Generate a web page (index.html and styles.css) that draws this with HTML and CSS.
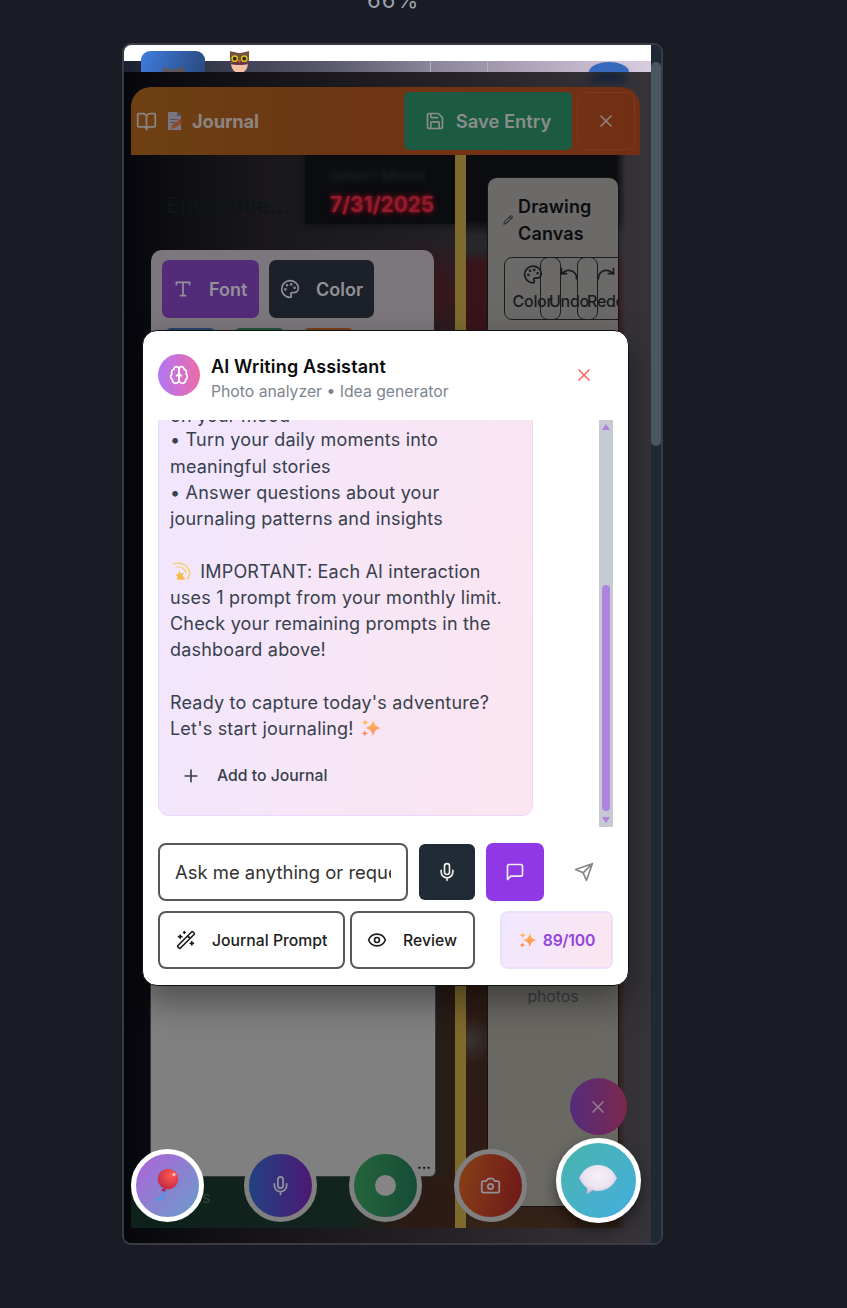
FILE: index.html
```html
<!DOCTYPE html>
<html lang="en">
<head>
<meta charset="utf-8">
<title>Journal</title>
<link rel="stylesheet" href="styles.css">
</head>
<body>
<svg class="defs" width="0" height="0">
  <defs>
    <linearGradient id="gold" x1="0" y1="0" x2="0" y2="1"><stop offset="0" stop-color="#ffc04d"/><stop offset="1" stop-color="#ff8a65"/></linearGradient>
    <radialGradient id="red" cx=".65" cy=".3" r=".8"><stop offset="0" stop-color="#ff5a50"/><stop offset="1" stop-color="#bd2544"/></radialGradient>
    <radialGradient id="cloud" cx=".5" cy=".4" r=".65"><stop offset="0" stop-color="#f7f1f8"/><stop offset=".6" stop-color="#ebe3ef"/><stop offset="1" stop-color="#c3a9d6"/></radialGradient>
    <symbol id="x" viewBox="0 0 24 24"><path d="M18 6 6 18M6 6l12 12"/></symbol>
    <symbol id="mic" viewBox="0 0 24 24"><path d="M12 2a3 3 0 0 0-3 3v7a3 3 0 0 0 6 0V5a3 3 0 0 0-3-3Z"/><path d="M19 10v2a7 7 0 0 1-14 0v-2M12 19v3"/></symbol>
    <symbol id="palette" viewBox="0 0 24 24"><circle cx="13.5" cy="6.5" r=".6"/><circle cx="17.5" cy="10.5" r=".6"/><circle cx="8.5" cy="7.5" r=".6"/><circle cx="6.5" cy="12.5" r=".6"/><path d="M12 2C6.500 2 2 6.500 2 12s4.500 10 10 10c.926 0 1.648-.746 1.648-1.688 0-.437-.18-.835-.437-1.125-.29-.289-.438-.652-.438-1.125a1.640 1.640 0 0 1 1.668-1.668h1.996c3.051 0 5.555-2.503 5.555-5.554C21.965 6.012 17.461 2 12 2z"/></symbol>
    <symbol id="spark" viewBox="0 0 24 24"><path fill="url(#gold)" stroke="none" d="M14.500 2.500c1.200 5.700 3.300 8 9.300 9.500-6 1.600-8.100 3.700-9.300 9.800-1.300-6.100-3.400-8.200-9.300-9.800 5.900-1.500 8-3.800 9.300-9.500ZM5 1.500c.5 2.500 1.400 3.400 4 4-2.600.6-3.500 1.600-4 4-.5-2.400-1.400-3.400-4-4 2.600-.6 3.500-1.500 4-4ZM4.500 14.500c.5 2.400 1.400 3.400 4 4-2.600.6-3.500 1.600-4 4-.5-2.400-1.400-3.400-4-4 2.600-.6 3.500-1.600 4-4Z"/></symbol>
    <symbol id="owl" viewBox="0 0 22 24"><path fill="#73523f" d="M1 1c4 1 7 2 10 2s6-1 10-2v9c0 4-2 6-10 6S1 14 1 10Z"/><path fill="#f4bfa3" d="M2 13h18c0 6-3 11-9 11S2 19 2 13Z"/><path fill="#633648" d="M3 11h16l1 4c-5 1-13 1-18 0Z"/><circle cx="6" cy="9" r="3.500" fill="#d9c81c"/><circle cx="16" cy="9" r="3.500" fill="#d9c81c"/><circle cx="6" cy="9" r="2" fill="#34291c"/><circle cx="16" cy="9" r="2" fill="#34291c"/><path fill="#f0522f" d="M9 10.500h4l-2 3Z"/></symbol>
  </defs>
</svg>
<div class="zoom">66%</div>
<main class="frame">
  <div class="page">
    <div class="topbar"></div>
    <div class="toolstrip"><i></i></div>
    <div class="owlcard"><svg class="owl-dim"><use href="#owl"/></svg></div>
    <svg class="owl"><use href="#owl"/></svg>
    <div class="bluedot"></div>

    <section class="journal">
      <header class="jhead">
        <svg class="ic book" viewBox="0 0 24 24"><path d="M12 7v14M3 18a1 1 0 0 1-1-1V4a1 1 0 0 1 1-1h5a4 4 0 0 1 4 4 4 4 0 0 1 4-4h5a1 1 0 0 1 1 1v13a1 1 0 0 1-1 1h-6a3 3 0 0 0-3 3 3 3 0 0 0-3-3z"/></svg>
        <svg class="memo" viewBox="0 0 16 20"><path fill="#7a7580" d="M1 1h9l4 4v14H1Z"/><path fill="#55505b" d="M10 1v4h4ZM3 8h8v1H3zM3 11h6v1H3z"/><path fill="#8c4a2c" d="m4 18 1-4 7-5 3 3-7 5Z"/><path fill="#8d3235" d="m12 9 2-1.500 2 2.500-1.500 2Z"/></svg>
        <h1>Journal</h1>
        <button class="save"><svg class="ic" viewBox="0 0 24 24"><path d="M15.200 3a2 2 0 0 1 1.400.6l3.800 3.800a2 2 0 0 1 .6 1.400V19a2 2 0 0 1-2 2H5a2 2 0 0 1-2-2V5a2 2 0 0 1 2-2z"/><path d="M17 21v-7a1 1 0 0 0-1-1H8a1 1 0 0 0-1 1v7M7 3v4a1 1 0 0 0 1 1h7"/></svg>Save Entry</button>
        <button class="jclose"><svg class="ic"><use href="#x"/></svg></button>
      </header>
      <div class="book-body">
        <div class="left">
          <div class="titlerow"><div class="datebox"><small>Select Mood</small><b>7/31/2025</b></div><span class="etitle">Entry title...</span></div>
          <div class="tools">
            <div class="row"><span class="tool font"><svg class="ic" viewBox="0 0 24 24"><path d="M4 7V4h16v3M9 20h6M12 4v16"/></svg>Font</span><span class="tool col"><svg class="ic"><use href="#palette"/></svg>Color</span></div>
            <div class="row chips"><i class="c1"></i><i class="c2"></i><i class="c3"></i></div>
          </div>
          <div class="paper"><span>...</span></div>
          <div class="foot">words</div>
        </div>
        <div class="spine"></div>
        <div class="right">
          <div class="canvas">
            <div class="ctitle"><svg class="ic" viewBox="0 0 24 24"><path d="M21.200 6.800a1 1 0 0 0-4-4L3.800 16.200 2 22l5.800-1.800zM15 5l4 4"/></svg><h2>Drawing<br>Canvas</h2></div>
            <div class="cbtns">
              <span class="cb first"><svg class="ic"><use href="#palette"/></svg>Color</span>
              <span class="cb"><svg class="ic" viewBox="0 0 24 24"><path d="M3 5v6h6"/><path d="M21 17a9 9 0 0 0-9-10 9 9 0 0 0-6 2L3 11"/></svg>Undo</span>
              <span class="cb last"><svg class="ic" viewBox="0 0 24 24"><path d="M21 5v6h-6"/><path d="M3 17a9 9 0 0 1 9-10 9 9 0 0 1 6 2l3 2"/></svg>Redo</span>
            </div>
            <div class="photos">photos</div>
          </div>
        </div>
      </div>
    </section>

    <section class="modal">
      <header class="mhead">
        <span class="avatar"><svg class="ic" viewBox="0 0 24 24"><path d="M12 5a3 3 0 1 0-5.997.125 4 4 0 0 0-2.526 5.770 4 4 0 0 0 .556 6.588A4 4 0 1 0 12 18Z"/><path d="M12 5a3 3 0 1 1 5.997.125 4 4 0 0 1 2.526 5.770 4 4 0 0 1-.556 6.588A4 4 0 1 1 12 18Z"/><path d="M15 13a4.500 4.500 0 0 1-3-4 4.500 4.500 0 0 1-3 4"/></svg></span>
        <div class="mtitle"><h3>AI Writing Assistant</h3><p>Photo analyzer • Idea generator</p></div>
        <svg class="ic mclose"><use href="#x"/></svg>
      </header>
      <div class="chat">
        <div class="bubble">
          <div class="lines">
            <p class="cut">on your mood</p>
            <p>• Turn your daily moments into</p><p>meaningful stories</p>
            <p>• Answer questions about your</p><p>journaling patterns and insights</p><br>
            <p><svg class="dizzy" viewBox="0 0 20 20"><path fill="none" stroke="#f9ce6a" stroke-width="1.500" stroke-linecap="round" d="M1.500 2C9-.5 17 3 18.500 11c.4 3-.5 5-2.500 7"/><path fill="none" stroke="#f9ce6a" stroke-width="1.200" stroke-linecap="round" d="M4 5.500c5-1.500 9.500 1 10.500 6"/><path fill="#f9b94a" d="m7.500 9.500 1.800 2.500 3.200-.5-1.300 3 3 3.300c-4 1.200-7 1.200-10 .2l2-2L3.500 13l3 .2Z"/></svg> IMPORTANT: Each AI interaction</p>
            <p>uses 1 prompt from your monthly limit.</p><p>Check your remaining prompts in the</p><p>dashboard above!</p><br>
            <p>Ready to capture today's adventure?</p><p>Let's start journaling! <svg class="spark"><use href="#spark"/></svg></p>
          </div>
          <div class="add"><svg class="ic" viewBox="0 0 24 24"><path d="M5 12h14M12 5v14"/></svg>Add to Journal</div>
        </div>
        <div class="mscroll"><i class="up"></i><i class="thumb"></i><i class="down"></i></div>
      </div>
      <div class="inputs">
        <div class="ask"><span>Ask me anything or request</span></div>
        <span class="sq dark"><svg class="ic"><use href="#mic"/></svg></span>
        <span class="sq purple"><svg class="ic" viewBox="0 0 24 24"><path d="M21 15a2 2 0 0 1-2 2H7l-4 4V5a2 2 0 0 1 2-2h14a2 2 0 0 1 2 2z"/></svg></span>
        <svg class="ic send" viewBox="0 0 24 24"><path d="m22 2-7 20-4-9-9-4ZM22 2 11 13"/></svg>
      </div>
      <div class="actions">
        <span class="act prompt"><svg class="ic" viewBox="0 0 24 24"><path d="m21.640 3.640-1.280-1.280a1.210 1.210 0 0 0-1.720 0L2.360 18.640a1.210 1.210 0 0 0 0 1.720l1.280 1.280a1.200 1.200 0 0 0 1.720 0L21.640 5.360a1.200 1.200 0 0 0 0-1.720M14 7l3 3M5 6v4M19 14v4M10 2v2M7 8H3M21 16h-4M11 3H9"/></svg>Journal Prompt</span>
        <span class="act review"><svg class="ic" viewBox="0 0 24 24"><path d="M2.060 12.350a1 1 0 0 1 0-.7 10.750 10.750 0 0 1 19.880 0 1 1 0 0 1 0 .7 10.750 10.750 0 0 1-19.880 0"/><circle cx="12" cy="12" r="3"/></svg>Review</span>
        <span class="quota"><svg class="spark"><use href="#spark"/></svg>89/100</span>
      </div>
    </section>

    <div class="closefab"><svg class="ic"><use href="#x"/></svg></div>
    <nav class="fabs">
      <span class="fab f1"><svg viewBox="0 0 24 34"><path fill="none" stroke="#3f9cf5" stroke-width="2" stroke-linecap="round" d="M9 23c1 4-1 4-1 6s-3 3-6 2.500"/><path fill="#b3204a" d="m9 19-3 4 5 .500Z"/><circle cx="13" cy="11" r="10.300" fill="url(#red)"/><circle cx="19" cy="6.500" r="1.700" fill="#ffb8a8"/></svg></span>
      <span class="fab f2"><svg class="ic"><use href="#mic"/></svg></span>
      <span class="fab f3"><i></i></span>
      <span class="fab f4"><svg class="ic" viewBox="0 0 24 24"><path d="M14.500 4h-5L7 7H4a2 2 0 0 0-2 2v9a2 2 0 0 0 2 2h16a2 2 0 0 0 2-2V9a2 2 0 0 0-2-2h-3z"/><circle cx="12" cy="13" r="3"/></svg></span>
      <span class="fab f5"><svg viewBox="0 0 38 30"><path fill="url(#cloud)" d="M19 0c9 0 15 5 19 13-4 8-10 13-19 13-2 0-4 0-6-1-1 2-3 3.500-6 4 1-2 1.500-4 1-6C5 21 2 17 0 13 4 5 10 0 19 0Z"/></svg></span>
    </nav>
  </div>
  <div class="scroll"><i></i></div>
</main>
</body>
</html>
```
FILE: styles.css
```css
* { box-sizing: border-box; margin: 0; padding: 0; }
body { background: #1a1c25; font-family: Inter, "Liberation Sans", sans-serif; width: 847px; height: 1308px; overflow: hidden; position: relative; }
button { font: inherit; background: none; border: 0; }
.defs { position: absolute; }
.ic { width: 20px; height: 20px; fill: none; stroke: currentColor; stroke-width: 2; stroke-linecap: round; stroke-linejoin: round; flex: none; }
.zoom { position: absolute; left: 367px; top: -12px; font-size: 22px; line-height: 24px; letter-spacing: 1.2px; color: #9ba3b0; }
.frame { width: 541px; height: 1202px; margin: 43px 0 0 122px; border: 2px solid #3b3a46; border-radius: 9px; overflow: hidden; display: flex; }
.page { width: 527px; height: 1198px; position: relative; overflow: hidden; background: linear-gradient(90deg, #06070c 0, #141217 22%, #242227 60%, #363338 95%); flex: none; }
.scroll { flex: 1; background: #1f2935; padding-top: 17px; }
.scroll i { display: block; height: 384px; background: #4b5663; border-radius: 5px; }

.topbar { height: 16px; background: #fff; }
.toolstrip { height: 11px; background: linear-gradient(90deg, #1b2031, #5c5b70 40%, #8a8598 58%, #b5a9be 80%, #d8cee0); padding-left: 306px; }
.toolstrip i { display: block; width: 58px; height: 11px; border: solid #b3aebc; border-width: 0 1px; }
.owlcard { position: absolute; left: 17px; top: 6px; width: 64px; height: 21px; border-radius: 9px 9px 0 0; background: linear-gradient(110deg, #407ddf, #294a80); overflow: hidden; }
.owl-dim { position: absolute; left: 20px; top: 15px; width: 25px; height: 26px; opacity: .7; }
.owl { position: absolute; left: 105px; top: 5px; width: 21px; height: 23px; clip-path: inset(0 0 1px); }
.bluedot { position: absolute; left: 465px; top: 17px; width: 40px; height: 10px; border-radius: 20px 20px 0 0 / 10px 10px 0 0; background: #3769bd; box-shadow: 0 10px 8px #11203a; clip-path: inset(0 -10px -15px); }

.journal { margin: 15px 0 0 7px; width: 509px; position: relative; }
.jhead { height: 68px; border-radius: 20px 20px 0 0; background: linear-gradient(90deg, #6e4013, #6b3713 35%, #733314 60%, #722f14); display: flex; align-items: center; padding: 5px; color: #8c8480; }
.book { width: 21px; height: 21px; }
.memo { width: 16px; height: 20px; margin: 0 8px 0 10px; }
.jhead h1 { font-size: 18.400px; font-weight: 700; letter-spacing: -.2px; margin-left: 1px; }
.save { width: 168px; height: 58px; margin-left: auto; border-radius: 5px; background: #1c5b42; color: #8a8d8c; font-size: 18.400px; font-weight: 600; display: flex; align-items: center; justify-content: center; gap: 11px; }
.jclose { width: 58px; height: 58px; margin-left: 5px; border: 1.500px solid #7a3a20; border-radius: 8px; color: #8f8580; display: grid; place-items: center; }
.book-body { display: flex; height: 1073px; }
.left { width: 324px; padding-left: 19px; display: flex; flex-direction: column; background: radial-gradient(ellipse 90px 60px at 300px 140px, #39151a, transparent), linear-gradient(90deg, transparent 85%, #2a1b13) 0 600px no-repeat, linear-gradient(90deg, #07080d, #19171c 40%, #222126); }
.titlerow { height: 95px; position: relative; flex: none; }
.etitle { position: absolute; left: 17px; top: 36px; font-size: 21.500px; line-height: 28px; font-weight: 500; letter-spacing: .4px; color: #0c1618; white-space: nowrap; }
.datebox { position: absolute; left: 155px; top: 0; width: 150px; height: 69px; background: #0a0c10; box-shadow: 0 0 8px #0a0c10; clip-path: inset(0 0 -14px -14px); text-align: center; }
.datebox small { display: block; font-size: 16px; line-height: 20px; padding: 10px 6px 0 0; color: #232527; filter: blur(2.5px); }
.datebox b { display: block; margin-top: 6px; font-size: 20.800px; line-height: 28px; color: #901b2a; text-shadow: 0 0 6px #9e1025, 0 0 3px #70101d; padding-left: 4px; }
.tools { width: 283px; height: 300px; flex: none; margin-left: 1px; border-radius: 11px; background: #7b777d; padding: 10px 10px 10px 11px; }
.row { display: flex; gap: 10px; }
.tool { height: 58px; border-radius: 7px; display: flex; align-items: center; padding-left: 11px; gap: 16px; font-size: 18px; font-weight: 600; color: #93919a; }
.font { width: 97px; background: #532b79; }
.col { width: 105px; background: #1c2029; }
.chips { padding: 10px 4px; gap: 20px; }
.chips i { width: 49px; height: 20px; border-radius: 5px; }
.c1 { background: #28446d; } .c2 { background: #25563b; } .c3 { background: #794018; }
.paper { width: 286px; flex: 1; background: #808080; border-radius: 0 0 6px 6px; display: flex; align-items: end; justify-content: end; padding: 0 4px 4px; color: #111; font-size: 14px; line-height: 16px; font-weight: 700; border: 1px solid #34383a; }
.foot { height: 51px; flex: none; margin: 0 0 0 -19px; width: 324px; padding: 10px 0 0 33px; font-size: 16px; color: #344039; background: linear-gradient(90deg, #0d211b 0, #12241e 68%, #2c1a14 84%); }
.spine { width: 11px; background: #7e6a2d; }
.right { width: 174px; padding: 22px 21px 22px 21px; background: linear-gradient(90deg, transparent 150px, #353237 160px), radial-gradient(circle 25px at 3px 885px, #393532, transparent), linear-gradient(#0a0c10 0, #0a0c10 65px, #26262b 80px, #26262b 95px, #39151a 108px, #37141a 190px, #2b1b16 500px, #2e1b15 1020px, #342317); }
.canvas { width: 132px; height: 1030px; border: 1.500px solid #151515; border-radius: 10px 10px 0 0; background: linear-gradient(#6b6a69, #686662 60%, #6b6963); overflow: hidden; display: flex; flex-direction: column; }
.ctitle { display: flex; align-items: center; padding: 15px 0 0 15px; gap: 5px; color: #0c0d10; }
.ctitle .ic { width: 10px; height: 10px; color: #2a2a2a; stroke-width: 2.500; }
.ctitle h2 { font-size: 18px; line-height: 27px; font-weight: 600; letter-spacing: .15px; }
.cbtns { display: flex; margin: 10px 0 0 16px; color: #181a1c; }
.cb { height: 63px; flex: none; border: 1.500px solid #1c1c1c; border-radius: 8px; display: flex; flex-direction: column; align-items: center; font-size: 16px; line-height: 20px; padding-top: 6px; gap: 6px; font-weight: 500; letter-spacing: -.3px; width: 58px; margin-right: -21px; }
.cb .ic { height: 21px; }
.first { width: 57px; }
.photos { margin-top: auto; height: 218px; color: #3b4047; text-align: center; font-size: 15.750px; line-height: 18px; }

.modal { position: absolute; left: 18px; top: 285px; width: 487px; height: 656px; background: #fff; border: 1.500px solid #111; border-radius: 15px; box-shadow: 0 15px 35px #0006; padding: 15px; display: flex; flex-direction: column; }
.mhead { height: 74px; flex: none; display: flex; padding-top: 8px; }
.avatar { width: 42px; height: 42px; border-radius: 50%; background: linear-gradient(90deg, #b276f4, #ed6ba9); color: #fff; display: grid; place-items: center; }
.mtitle { margin-left: 11px; }
.mtitle h3 { font-size: 18px; line-height: 25px; font-weight: 600; letter-spacing: .16px; color: #0b0b0b; }
.mtitle p { font-size: 15.750px; line-height: 25px; color: #7e8490; white-space: nowrap; }
.mclose { margin: 11px 19px 0 auto; color: #fb6560; }
.chat { height: 407px; flex: none; overflow: hidden; display: flex; justify-content: space-between; }
.bubble { width: 375px; height: 396px; border: 1.500px solid #ebd9fc; border-top: 0; border-radius: 0 0 11px 11px; background: linear-gradient(100deg, #f0e6ff, #f7e6f6 50%, #fbe5f0); color: #38404d; overflow: hidden; display: flex; flex-direction: column; }
.lines { margin-top: -17px; padding-left: 11px; font-size: 18px; line-height: 26.270px; letter-spacing: .19px; white-space: nowrap; }
.cut { margin-bottom: -2px; }
.dizzy { width: 19px; height: 19px; vertical-align: -3px; margin: 0 4px 0 2px; }
.spark { width: 20px; height: 20px; vertical-align: -3px; margin-left: 2px; }
.add { display: flex; align-items: center; gap: 16px; padding: 22px 0 0 22px; font-size: 15.750px; line-height: 24px; font-weight: 500; }
.mscroll { width: 14px; background: #c6cad2; display: flex; flex-direction: column; align-items: center; }
.up { margin-top: 4px; border: 4px solid transparent; border-top: 0; border-bottom: 6px solid #ad83dd; }
.thumb { width: 8px; height: 226px; margin-top: 155px; border-radius: 4px; background: #ad83dd; }
.down { margin-top: 6px; border: 4px solid transparent; border-bottom: 0; border-top: 6px solid #ad83dd; }
.inputs { display: flex; align-items: center; margin-top: 16px; flex: none; }
.ask { width: 250px; height: 58px; border: 2px solid #575757; border-radius: 8px; padding: 0 15px; display: flex; align-items: center; font-size: 18.450px; color: #333; }
.ask span { overflow: hidden; white-space: nowrap; }
.sq { display: grid; place-items: center; color: #eee; }
.dark { width: 56px; height: 56px; margin-left: 11px; border-radius: 6px; background: #212b36; }
.purple { width: 58px; height: 58px; margin-left: 11px; border-radius: 7px; background: #9038e5; }
.send { color: #858585; margin: 0 19px 0 auto; }
.actions { display: flex; margin-top: 10px; flex: none; }
.act { height: 58px; border: 2px solid #575757; border-radius: 8px; display: flex; align-items: center; padding-left: 16px; gap: 16px; font-size: 15.750px; font-weight: 500; color: #1d1d1d; white-space: nowrap; }
.prompt { width: 187px; margin-right: 5px; }
.review { width: 125px; padding-left: 15px; }
.quota { width: 113px; height: 58px; margin-left: auto; border: 2px solid #eddffc; border-radius: 8px; background: linear-gradient(110deg, #f0e7ff, #fce5ef); display: flex; align-items: center; justify-content: center; gap: 6px; color: #9343da; font-size: 15.750px; font-weight: 600; letter-spacing: -.2px; }
.quota .spark { width: 18px; margin-left: 1px; }

.closefab { position: absolute; left: 445.500px; top: 1033px; width: 57px; height: 57px; border-radius: 50%; background: linear-gradient(90deg, #542c7c, #7c274d); color: #927e91; display: grid; place-items: center; }
.fabs { position: absolute; left: 6.500px; top: 1093px; height: 84px; display: flex; align-items: center; }
.fab { width: 73px; height: 73px; margin: 10px 32px 0 0; border: 5px solid #808080; border-radius: 50%; display: grid; place-items: center; color: #92919a; flex: none; }
.fab .ic { width: 21px; height: 21px; }
.f1 { border-color: #fff; margin-right: 40px; background: linear-gradient(135deg, #af61db, #699fc8); }
.f1 > svg { width: 24px; height: 34px; }
.f2 { background: linear-gradient(90deg, #214281, #4c1973); }
.f3 { background: linear-gradient(90deg, #25653a, #164c38); }
.f3 i { width: 21px; height: 21px; border-radius: 50%; background: #858585; }
.f4 { background: linear-gradient(100deg, #884019, #6d1718); margin-right: 29px; }
.f5 { width: 85px; height: 85px; margin: 0; border: 5.500px solid #fff; background: linear-gradient(135deg, #49b4ab, #45aee0); box-shadow: 0 7px 14px #0007; }
.f5 > svg { width: 38px; height: 30px; }
```
